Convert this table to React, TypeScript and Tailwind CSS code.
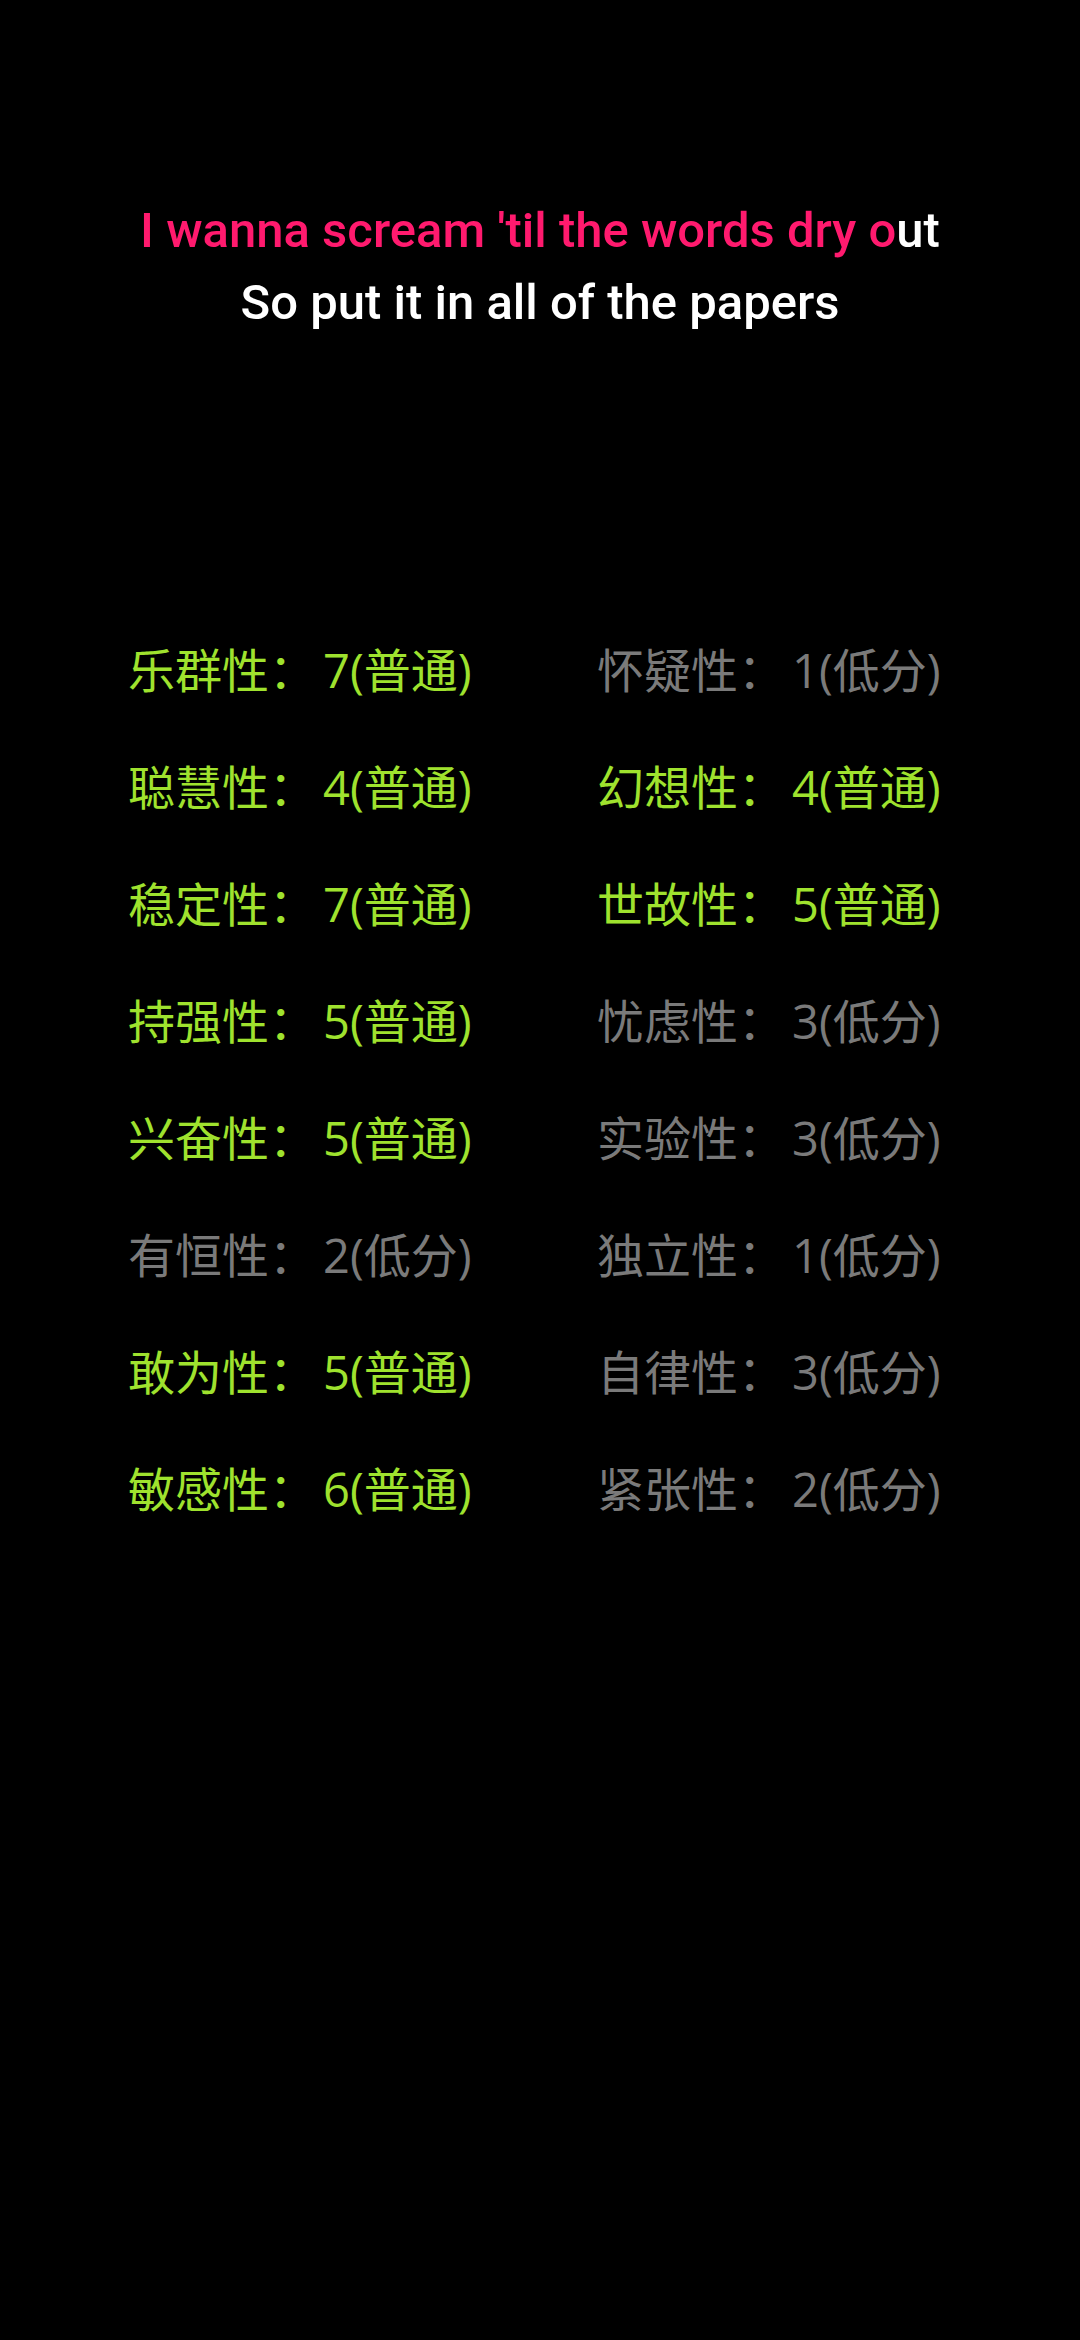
const TRAITS = [
  { left: { name: '乐群性', score: 7, high: true }, right: { name: '怀疑性', score: 1, high: false } },
  { left: { name: '聪慧性', score: 4, high: true }, right: { name: '幻想性', score: 4, high: true } },
  { left: { name: '稳定性', score: 7, high: true }, right: { name: '世故性', score: 5, high: true } },
  { left: { name: '持强性', score: 5, high: true }, right: { name: '忧虑性', score: 3, high: false } },
  { left: { name: '兴奋性', score: 5, high: true }, right: { name: '实验性', score: 3, high: false } },
  { left: { name: '有恒性', score: 2, high: false }, right: { name: '独立性', score: 1, high: false } },
  { left: { name: '敢为性', score: 5, high: true }, right: { name: '自律性', score: 3, high: false } },
  { left: { name: '敏感性', score: 6, high: true }, right: { name: '紧张性', score: 2, high: false } },
];

type Trait = { name: string; score: number; high: boolean };

function TraitCell({ trait }: { trait: Trait }) {
  return (
    <p className={trait.high ? 'text-[#9fe22e]' : 'text-[#7a7a7a]'}>
      {trait.name}：
      <span className="ml-[7px]">
        {trait.score}({trait.high ? '普通' : '低分'})
      </span>
    </p>
  );
}

export default function App() {
  return (
    <div className="min-h-[2340px] w-[1080px] bg-black">
      <div className="pt-[195px] text-center font-['Roboto',sans-serif] text-[49px] font-medium leading-[72px]">
        <p className="text-white">
          <span className="text-[#ff1a6e]">I wanna scream 'til the words dry o</span>ut
        </p>
        <p className="text-white">So put it in all of the papers</p>
      </div>

      <div className="mt-[273px] grid grid-cols-[469px_1fr] pl-[128px] font-['Open_Sans','Noto_Sans_CJK_SC',sans-serif] text-[47px] leading-[117px]">
        {TRAITS.map((row) => (
          <div key={row.left.name} className="contents">
            <TraitCell trait={row.left} />
            <TraitCell trait={row.right} />
          </div>
        ))}
      </div>
    </div>
  );
}
